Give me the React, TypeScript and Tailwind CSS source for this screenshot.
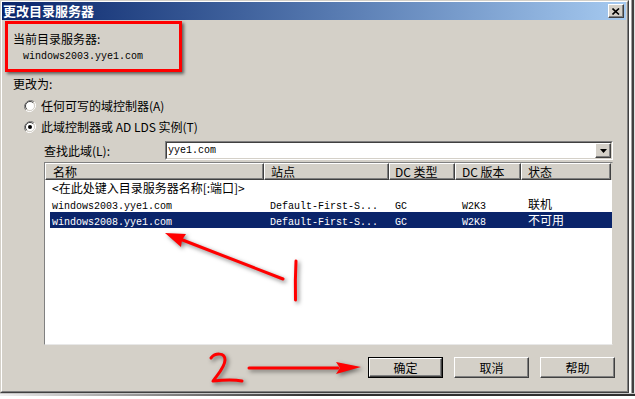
import React from "react";

function Radio({ checked }: { checked?: boolean }) {
  return (
    <svg width="12" height="12" viewBox="0 0 12 12" className="shrink-0">
      <path d="M10.2 1.8 A6 6 0 0 0 1.8 10.2" fill="none" stroke="#808080" strokeWidth="1" />
      <path d="M1.8 10.2 A6 6 0 0 0 10.2 1.8" fill="none" stroke="#ffffff" strokeWidth="1" />
      <circle cx="6" cy="6" r="4.6" fill="#ffffff" />
      <path d="M9.2 2.8 A4.5 4.5 0 0 0 2.8 9.2" fill="none" stroke="#404040" strokeWidth="1" />
      <path d="M2.8 9.2 A4.5 4.5 0 0 0 9.2 2.8" fill="none" stroke="#d4d0c8" strokeWidth="1" />
      {checked && <circle cx="6" cy="6" r="2" fill="#000000" />}
    </svg>
  );
}

function Btn({ label, def }: { label: string; def?: boolean }) {
  return (
    <div className={def ? "w-[75px] h-[21px] border border-black" : "w-[75px] h-[21px]"}>
      <div className="w-full h-full bg-[#d4d0c8] border border-t-white border-l-white border-r-[#404040] border-b-[#404040] shadow-[inset_-1px_-1px_0_#808080] flex items-center justify-center text-[12px] leading-[12px]">
        {label}
      </div>
    </div>
  );
}

const mono = "font-['Liberation_Mono',monospace] text-[10px]";

export default function App() {
  const headers = [
    { t: "名称", w: "w-[219px]", p: "pl-[7px]" },
    { t: "站点", w: "w-[125px]", p: "pl-[6px]" },
    { t: "DC 类型", w: "w-[66px]", p: "pl-[5px]" },
    { t: "DC 版本", w: "w-[66px]", p: "pl-[6px]" },
    { t: "状态", w: "w-[90px]", p: "pl-[6px]" },
  ];
  const rows = [
    ["windows2003.yye1.com", "Default-First-S...", "GC", "W2K3", "联机"],
    ["windows2008.yye1.com", "Default-First-S...", "GC", "W2K8", "不可用"],
  ];
  return (
    <div className="relative w-[635px] h-[399px] bg-white overflow-hidden font-['Noto_Sans_CJK_SC',sans-serif] text-[12px] text-black">
      <div className="flex h-[393px]">
        <div className="w-[629px] h-[393px] border border-t-[#d4d0c8] border-l-[#d4d0c8] border-r-[#404040] border-b-[#404040]">
          <div className="w-full h-full border border-t-white border-l-white border-r-[#808080] border-b-[#808080] bg-[#d4d0c8] flex flex-col">
            {/* title bar */}
            <div className="h-[18px] mr-[1px] bg-gradient-to-r from-[#0a246a] to-[#a6caf0] flex items-center justify-between pl-[1px] pr-[2px]">
              <span className="text-white font-bold text-[13px] leading-[18px]">更改目录服务器</span>
              <div className="w-[16px] h-[14px] bg-[#d4d0c8] border border-t-white border-l-white border-r-[#404040] border-b-[#404040] shadow-[inset_-1px_-1px_0_#808080] flex items-center justify-center">
                <svg width="8" height="7" viewBox="0 0 8 7">
                  <path d="M0.5 0.5 L7 6.5 M7 0.5 L0.5 6.5" stroke="#000" strokeWidth="1.6" />
                </svg>
              </div>
            </div>
            {/* content */}
            <div className="flex flex-col pl-[11px]">
              <div className="h-[14px] mt-[12px] leading-[14px]">当前目录服务器:</div>
              <div className={`h-[14px] mt-[4px] leading-[14px] pl-[10px] ${mono}`}>windows2003.yye1.com</div>
              <div className="h-[14px] mt-[13px] leading-[14px]">更改为:</div>
              <div className="h-[14px] mt-[8px] flex items-center ml-[11px] gap-[5px] leading-[14px]">
                <Radio />
                <span>任何可写的域控制器(A)</span>
              </div>
              <div className="h-[14px] mt-[7px] flex items-center ml-[11px] gap-[5px] leading-[14px]">
                <Radio checked />
                <span>此域控制器或 AD LDS 实例(T)</span>
              </div>
              <div className="h-[19px] mt-[7px] flex items-center ml-[31px]">
                <span className="w-[121px] leading-[14px]">查找此域(L):</span>
                <div className="w-[448px] h-[19px] border border-t-[#808080] border-l-[#808080] border-r-white border-b-white">
                  <div className="w-full h-full bg-white border border-t-[#404040] border-l-[#404040] border-r-[#d4d0c8] border-b-[#d4d0c8] flex items-center justify-between">
                    <span className={`${mono} pl-[1px] leading-[14px]`}>yye1.com</span>
                    <div className="w-[16px] h-[15px] bg-[#d4d0c8] border border-t-white border-l-white border-r-[#404040] border-b-[#404040] shadow-[inset_-1px_-1px_0_#808080] flex items-center justify-center">
                      <svg width="7" height="4" viewBox="0 0 7 4">
                        <path d="M0 0 H7 L3.5 4 Z" fill="#000" />
                      </svg>
                    </div>
                  </div>
                </div>
              </div>
              {/* list */}
              <div className="mt-[2px] ml-[31px] w-[569px] h-[183px] border border-t-[#808080] border-l-[#808080] border-r-[#d4d0c8] border-b-[#e8e8e8] bg-white flex flex-col">
                <div className="flex h-[17px] bg-[#d4d0c8]">
                  {headers.map((h) => (
                    <div
                      key={h.t}
                      className={`${h.w} ${h.p} h-[17px] border border-t-white border-l-white border-r-[#404040] border-b-[#404040] shadow-[inset_-1px_-1px_0_#808080] leading-[15px] text-[12px]`}
                    >
                      {h.t}
                    </div>
                  ))}
                </div>
                <div className="h-[16px] ml-[5px] pl-[2px] flex items-center whitespace-nowrap leading-[16px]">
                  &lt;在此处键入目录服务器名称[:端口]&gt;
                </div>
                {rows.map((r, i) => {
                  const sel = i === 1;
                  return (
                    <div
                      key={i}
                      className={`h-[16px] ml-[5px] w-[562px] flex items-baseline whitespace-nowrap leading-[16px] ${sel ? "bg-[#0a246a] text-white" : ""}`}
                    >
                      <div className={`w-[214px] pl-[2px] ${mono}`}>{r[0]}</div>
                      <div className={`w-[125px] pl-[6px] ${mono}`}>{r[1]}</div>
                      <div className={`w-[66px] pl-[6px] ${mono}`}>{r[2]}</div>
                      <div className={`w-[66px] pl-[7px] ${mono}`}>{r[3]}</div>
                      <div className="w-[91px] pl-[7px] text-[12px]">{r[4]}</div>
                    </div>
                  );
                })}
              </div>
              {/* buttons */}
              <div className="mt-[12px] flex justify-end gap-[11px] pr-[12px]">
                <Btn label="确定" def />
                <Btn label="取消" />
                <Btn label="帮助" />
              </div>
            </div>
          </div>
        </div>
        <div className="flex w-[6px] h-full">
          <div className="w-[2px] bg-white" />
          <div className="w-[1px] bg-[#a0a0a0]" />
          <div className="w-[2px] bg-[#404040]" />
          <div className="w-[1px] bg-[#e0e0e0]" />
        </div>
      </div>
      <div className="h-[1px] bg-[#c8c8c8]" />
      <div className="h-[2px] bg-gradient-to-r from-[#f0f0f0] via-[#303030] to-[#303030]" />
      <div className="h-[3px] bg-white" />

      {/* red highlight box */}
      <div className="absolute left-[5px] top-[21px] w-[177px] h-[51px] border-[3px] border-[#ff0000] shadow-[2px_2px_3px_rgba(0,0,0,0.55)] pointer-events-none" />

      {/* red annotations */}
      <svg
        className="absolute left-0 top-0 pointer-events-none"
        width="635"
        height="399"
        viewBox="0 0 635 399"
        style={{ filter: "drop-shadow(2px 2px 2px rgba(0,0,0,0.5))" }}
      >
        <path d="M283 279 L180 239" stroke="#ff0000" strokeWidth="3" strokeLinecap="round" fill="none" />
        <path d="M165 233 L186 234 L182 240 L181 247 Z" fill="#ff0000" />
        <path d="M296 261 Q295 280 295.5 300" stroke="#ff0000" strokeWidth="3" strokeLinecap="round" fill="none" />
        <path
          d="M211 358 C215 353 225 352 225 360 C225 367 218 374 213 381 C222 380 232 379 242 381"
          stroke="#ff0000"
          strokeWidth="3"
          strokeLinecap="round"
          strokeLinejoin="round"
          fill="none"
        />
        <path d="M249 368 L338 368" stroke="#ff0000" strokeWidth="3" strokeLinecap="round" fill="none" />
        <path d="M336 362 L361 367 L336 374 L340 368 Z" fill="#ff0000" />
      </svg>
    </div>
  );
}
